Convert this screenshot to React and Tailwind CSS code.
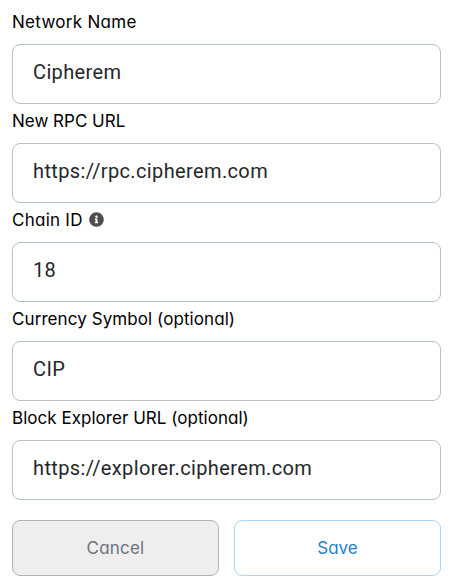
import { FaInfoCircle } from 'react-icons/fa';

const fields = [
  { label: 'Network Name', value: 'Cipherem', tracking: 'tracking-[0.3px]' },
  { label: 'New RPC URL', value: 'https://rpc.cipherem.com', tracking: 'tracking-[0px]' },
  { label: 'Chain ID', value: '18', info: true, tracking: 'tracking-[0.25px]' },
  { label: 'Currency Symbol (optional)', value: 'CIP', tracking: 'tracking-[0.08px]' },
  { label: 'Block Explorer URL (optional)', value: 'https://explorer.cipherem.com', tracking: 'tracking-[0.03px]' },
];

function Field({ label, value, info, tracking }) {
  return (
    <label className="block">
      <span className="flex h-[39px] items-center gap-[6px] pb-[3px] text-[17px] text-black">
        <span className={tracking}>{label}</span>
        {info && <FaInfoCircle className="mb-1 size-[15px] text-[#4d4d4d]" />}
      </span>
      <input
        className="block h-[60px] w-full rounded-lg border border-[#bbc0c5] bg-white px-5 pb-[5px] font-[Roboto,sans-serif] text-[20px] tracking-[0.37px] text-[#24272a] outline-none"
        defaultValue={value}
      />
    </label>
  );
}

export default function App() {
  return (
    <form className="h-[587px] overflow-hidden bg-white pt-[5px] pr-[17px] pl-3 font-[Inter,sans-serif] [font-feature-settings:'cv11']">
      {fields.map((field) => (
        <Field key={field.label} {...field} />
      ))}
      <div className="mt-5 grid grid-cols-2 gap-[15px]">
        <button type="button" className="h-14 rounded-lg border border-[#b3b3b3] bg-[#eeeeee] pt-0.5 text-[17px] tracking-[0.2px] text-[#6a737d]">Cancel</button>
        <button type="button" className="h-14 rounded-lg border border-[#b0d7f2] bg-white pt-0.5 text-[17px] text-[#1f7fd1]">Save</button>
      </div>
    </form>
  );
}
